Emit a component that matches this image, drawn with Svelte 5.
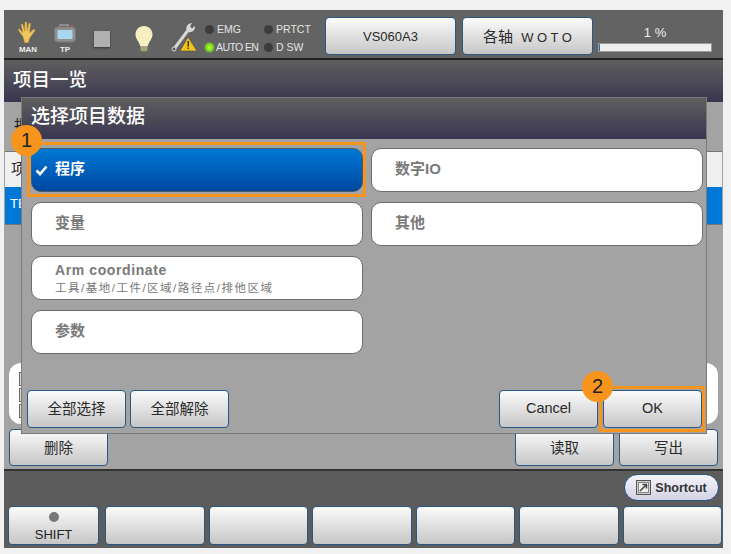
<script>
  const functionKeys = ['', '', '', '', '', ''];
  const options = [
    { label: '程序', on: true },
    { label: '数字IO' },
    { label: '变量' },
    { label: '其他' },
    { label: 'Arm coordinate', sub: '工具/基地/工件/区域/路径点/排他区域' },
    { gap: true },
    { label: '参数' }
  ];
</script>

<div class="page">
  <div class="device">
    <header class="topbar">
      <div class="icon hand">
        <svg width="24" height="27" viewBox="0 0 24 24" preserveAspectRatio="none">
          <path d="M6.500 14 2.600 9.400c-.7-.9.500-1.900 1.300-1L7 11.400 5.300 4.600c-.3-1.200 1.300-1.600 1.600-.4L8.600 10 9 2.600c.1-1.300 1.800-1.200 1.800 0l.2 7.300 1.800-6.500c.4-1.200 1.900-.8 1.600.4L13.600 11.500l3.700-3c1-.8 2.100.4 1.200 1.400l-4.500 5.600c-.9 1.300-1.500 3.500-1.500 4.500H8.500c-.3-2.500-1-4.300-2-6z" fill="#eec65c" stroke="#c79a3c" stroke-width=".5"/>
        </svg>
        <span>MAN</span>
      </div>
      <div class="icon tp">
        <svg width="24" height="19" viewBox="0 0 24 19">
          <path d="M7 3V1h8v2" fill="none" stroke="#9a9a9a" stroke-width="1.500"/>
          <rect x="17" y="1" width="3" height="2" fill="#c0504d"/>
          <rect x="1.500" y="3" width="21" height="15" rx="3" fill="#8f8f8f" stroke="#777"/>
          <rect x="4.500" y="6" width="15" height="9" rx="1" fill="#a9d8ee"/>
        </svg>
        <span>TP</span>
      </div>
      <div class="stop"></div>
      <svg class="bulb" width="20" height="28" viewBox="0 0 20 28">
        <path d="M10 1C4.800 1 1.500 5 1.500 9.500c0 4.500 3.500 6.500 4.800 12h7.400c1.300-5.500 4.800-7.500 4.800-12C18.500 5 15.200 1 10 1z" fill="#f6f0c0"/>
        <rect x="6.500" y="22" width="7" height="4" fill="#a8a370"/>
        <rect x="8" y="26" width="4" height="1.500" fill="#77735a"/>
      </svg>
      <svg class="wrench" width="26" height="30" viewBox="0 0 26 30">
        <path d="M3 27 18 7" stroke="#d8d8d8" stroke-width="3" stroke-linecap="round"/>
        <path d="M16 9c-2-4 1-8 5-8l-2 3.500 2 2 3-2.500c.5 4-3 7-7 6z" fill="#d8d8d8"/>
        <circle cx="3" cy="27" r="2" fill="#555" stroke="#d8d8d8"/>
        <path d="M17 15 26 29H9z" fill="#f2c21b" stroke="#444" stroke-width=".5"/>
        <rect x="16.500" y="19" width="1.500" height="5.500" fill="#333"/>
        <rect x="16.500" y="25.500" width="1.500" height="1.500" fill="#333"/>
      </svg>
      <div class="leds">
        <div class="led"><i></i>EMG</div>
        <div class="led"><i></i>PRTCT</div>
        <div class="led tight"><i class="green"></i>AUTO EN</div>
        <div class="led"><i></i>D SW</div>
      </div>
      <button class="btn model">VS060A3</button>
      <button class="btn axis">各轴 <span>W O T O</span></button>
      <div class="speed">
        <div class="pct">1 %</div>
        <div class="bar"><div class="fill" style="width: 1%"></div></div>
      </div>
    </header>

    <div class="title">项目一览</div>

    <main class="content">
      <div class="filter">批</div>
      <div class="table">
        <div class="thead">项</div>
        <div class="trow">TE</div>
      </div>
      <div class="panel">
        <i></i><i></i><i></i>
      </div>
      <div class="actions">
        <button class="btn wide">删除</button>
        <div class="actions-right">
          <button class="btn wide">读取</button>
          <button class="btn wide">写出</button>
        </div>
      </div>
    </main>

    <footer class="bottom">
      <div class="shortcut-row">
        <button class="shortcut">
          <svg width="15" height="15" viewBox="0 0 15 15">
            <rect x=".5" y=".5" width="14" height="14" fill="#d0d0d0" stroke="#555"/>
            <rect x="2.500" y="2.500" width="10" height="10" fill="#eee" stroke="#888"/>
            <path d="M4 11 10 5M6.500 4.500h4v4" stroke="#444" stroke-width="1.500" fill="none"/>
          </svg>
          Shortcut
        </button>
      </div>
      <div class="fkeys">
        <button class="btn fkey shift"><i></i>SHIFT</button>
        {#each functionKeys as key}
          <button class="btn fkey">{key}</button>
        {/each}
      </div>
    </footer>

    <section class="dialog">
      <h2>选择项目数据</h2>
      <div class="body">
        <div class="options">
          {#each options as o}
            {#if o.gap}
              <div></div>
            {:else}
              <button class="opt" class:on={o.on} class:two={o.sub}>
                {#if o.on}
                  <svg class="check" width="13" height="11" viewBox="0 0 13 11">
                    <path d="M1.500 5.500 5 9l6.500-7.500" fill="none" stroke="#fff" stroke-width="2.600"/>
                  </svg>
                {/if}
                <b>{o.label}</b>
                {#if o.sub}<small>{o.sub}</small>{/if}
              </button>
            {/if}
          {/each}
        </div>
        <div class="foot">
          <button class="btn wide">全部选择</button>
          <button class="btn wide">全部解除</button>
          <div class="spacer"></div>
          <button class="btn wide">Cancel</button>
          <button class="btn wide ok">OK</button>
        </div>
      </div>
    </section>

    <div class="mark mark-a"></div>
    <div class="mark mark-b"></div>
    <div class="badge badge-a">1</div>
    <div class="badge badge-b">2</div>
  </div>
</div>

<style>
  :global(body) {
    margin: 0;
    background: #f1f1f1;
  }
  .page {
    width: 731px;
    height: 554px;
    padding: 10px 8px 6px 4px;
    box-sizing: border-box;
    font-family: "Liberation Sans", "Noto Sans CJK SC", sans-serif;
    overflow: hidden;
  }
  .device {
    position: relative;
    width: 719px;
    height: 538px;
    display: flex;
    flex-direction: column;
    background: #5c5c5c;
  }
  button {
    font-family: inherit;
    margin: 0;
    padding: 0;
  }
  .btn {
    box-sizing: border-box;
    border: 1.500px solid #2a5784;
    border-radius: 4px;
    background: linear-gradient(#fbfbfb, #c6c6c6);
    color: #2a2a2a;
    font-size: 14.500px;
    height: 38px;
    padding-bottom: 3px;
    flex: none;
  }
  .wide {
    width: 99px;
  }

  .topbar {
    height: 50px;
    box-sizing: border-box;
    flex: none;
    background: #636363;
    border-bottom: 2px solid #222;
    display: flex;
    align-items: flex-start;
    position: relative;
  }
  .icon {
    display: flex;
    flex-direction: column;
    align-items: center;
    color: #eee;
    font-size: 8px;
    line-height: 8px;
    flex: none;
  }
  .icon span {
    display: block;
  }
  .hand {
    width: 24px;
    margin: 10px 0 0 12px;
  }
  .hand span {
    margin-top: -1px;
    font-weight: 700;
  }
  .tp {
    width: 24px;
    margin: 14px 0 0 13px;
  }
  .tp span {
    margin-top: 3px;
    font-weight: 700;
  }
  .stop {
    width: 16px;
    height: 16px;
    margin: 21px 0 0 17px;
    flex: none;
    background: #b0b0b0;
    box-shadow: 0 1px 2px #333;
  }
  .bulb {
    margin: 15px 0 0 24px;
    flex: none;
  }
  .wrench {
    margin: 12px 0 0 17px;
    flex: none;
  }
  .leds {
    width: 118px;
    margin: 10px 0 0 8px;
    flex: none;
    display: grid;
    grid-template-columns: 59px 59px;
    grid-auto-rows: 18px;
    align-items: center;
    color: #e4e4e4;
    font-size: 10.500px;
  }
  .led {
    display: flex;
    align-items: center;
    white-space: nowrap;
    gap: 3px;
  }
  .led.tight {
    gap: 2px;
    letter-spacing: -.6px;
  }
  .led i {
    width: 9px;
    height: 9px;
    border-radius: 50%;
    background: #3c3c3c;
    flex: none;
  }
  .led i.green {
    background: radial-gradient(#b6ff3a, #4fb50a);
    box-shadow: 0 0 2px #7de02a;
  }
  .model {
    width: 131px;
    margin: 7px 0 0 2px;
    font-size: 13px;
    padding-bottom: 0;
  }
  .axis {
    width: 131px;
    margin: 7px 0 0 6px;
    font-size: 15px;
    padding-bottom: 2px;
  }
  .axis span {
    font-size: 13px;
    margin-left: 4px;
  }
  .speed {
    width: 114px;
    margin: 0 0 0 5px;
    flex: none;
  }
  .pct {
    color: #eee;
    text-align: center;
    font-size: 13px;
    line-height: 16px;
    margin-top: 15px;
  }
  .bar {
    height: 9px;
    margin-top: 2px;
    background: #efefef;
    border: 1px solid #999;
    box-sizing: border-box;
  }
  .fill {
    height: 100%;
    background: #2f6fb0;
  }

  .title {
    height: 42px;
    box-sizing: border-box;
    flex: none;
    background: linear-gradient(#5f5f5f, #393650);
    color: #fff;
    font-size: 18.500px;
    font-weight: 500;
    line-height: 40px;
    padding-left: 9px;
  }

  .content {
    flex: 1;
    min-height: 0;
    background: #a3a3a3;
    border-bottom: 2px solid #333;
    display: flex;
    flex-direction: column;
    padding: 0 5px;
    box-sizing: border-box;
  }
  .filter {
    height: 49px;
    flex: none;
    font-size: 15px;
    color: #222;
    padding: 12px 0 0 5px;
    box-sizing: border-box;
  }
  .table {
    margin: 0 -4px 0 -4px;
    flex: none;
  }
  .thead {
    height: 36px;
    background: #f0f0f0;
    border-top: 1px solid #777;
    box-sizing: border-box;
    font-size: 15px;
    line-height: 34px;
    padding-left: 6px;
    color: #222;
  }
  .trow {
    height: 37px;
    background: #0078d7;
    color: #fff;
    font-size: 13px;
    line-height: 33px;
    padding-left: 5px;
    border-bottom: 1px solid #777;
  }
  .panel {
    flex: none;
    margin: 138px 0 0 0;
    height: 61px;
    width: 709px;
    background: #fff;
    border-radius: 12px;
    padding: 9px 0 0 10px;
    box-sizing: border-box;
    display: flex;
    flex-direction: column;
    gap: 2px;
  }
  .panel i {
    display: block;
    width: 6px;
    height: 12px;
    border: 1px solid #666;
    background: #ddd;
  }
  .actions {
    display: flex;
    justify-content: space-between;
    margin-top: 5px;
    width: 709px;
  }
  .actions .btn {
    height: 37px;
  }
  .actions-right {
    display: flex;
    gap: 5px;
  }

  .bottom {
    height: 77px;
    flex: none;
    background: #5c5c5c;
    padding: 3px 1px 3px 4px;
    box-sizing: border-box;
    display: flex;
    flex-direction: column;
    justify-content: space-between;
  }
  .shortcut-row {
    display: flex;
    justify-content: flex-end;
    padding-right: 3px;
  }
  .shortcut {
    width: 95px;
    height: 27px;
    border-radius: 14px;
    border: 1.500px solid #2a5784;
    background: linear-gradient(#f4f4fa, #d4d2e4);
    color: #333;
    font-size: 12.500px;
    font-weight: 700;
    display: flex;
    align-items: center;
    justify-content: center;
    gap: 4px;
  }
  .fkeys {
    display: flex;
    gap: 4px;
  }
  .fkey {
    flex: 1;
    height: 39px;
    font-size: 13px;
    color: #222;
  }
  .shift {
    flex: none;
    width: 91px;
    margin-right: 2px;
    padding: 2px 0 0;
    display: flex;
    flex-direction: column;
    align-items: center;
    justify-content: center;
    gap: 5px;
  }
  .shift i {
    width: 10px;
    height: 10px;
    border-radius: 50%;
    background: #777;
    display: block;
  }

  .dialog {
    position: absolute;
    left: 18px;
    top: 88px;
    width: 684px;
    height: 335px;
    background: #a3a3a3;
    box-shadow: 0 0 0 1px #7b7b7b;
    display: flex;
    flex-direction: column;
  }
  .dialog h2 {
    margin: 0;
    height: 41px;
    flex: none;
    background: linear-gradient(#5f5f5f, #393650);
    color: #fff;
    font-size: 19px;
    font-weight: 500;
    line-height: 38px;
    padding-left: 9px;
    box-sizing: border-box;
  }
  .body {
    flex: 1;
    display: flex;
    flex-direction: column;
    justify-content: space-between;
    padding: 9px 4px 5px 5px;
  }
  .options {
    margin-left: 4px;
    display: grid;
    grid-template-columns: 332px 332px;
    grid-auto-rows: 44px;
    column-gap: 8px;
    row-gap: 10px;
  }
  .opt {
    position: relative;
    border: 1.500px solid #6d6d6d;
    border-radius: 10px;
    background: #fff;
    color: #7a7a7a;
    text-align: left;
    padding: 0 0 3px 23px;
    font-size: 15px;
    display: flex;
    flex-direction: column;
    justify-content: center;
    align-items: flex-start;
    box-sizing: border-box;
  }
  .opt b {
    font-weight: 700;
    line-height: 18px;
  }
  .opt.two {
    padding-bottom: 0;
    justify-content: flex-start;
    padding-top: 4px;
  }
  .opt.two b {
    font-size: 14px;
    letter-spacing: .6px;
  }
  .opt small {
    font-size: 11.500px;
    line-height: 18px;
    letter-spacing: 1.500px;
    color: #777;
    white-space: nowrap;
  }
  .opt.on {
    background: linear-gradient(#0079d5, #00479f);
    color: #fff;
    border-color: #4d5a68;
  }
  .check {
    position: absolute;
    left: 3px;
    top: 16px;
  }
  .foot {
    display: flex;
    gap: 4px;
  }
  .ok {
    margin-left: 1px;
  }
  .spacer {
    flex: 1;
  }

  .mark {
    position: absolute;
    border: 3px solid #f7941d;
    box-sizing: border-box;
    pointer-events: none;
  }
  .mark-a {
    left: 23px;
    top: 132px;
    width: 339px;
    height: 55px;
  }
  .mark-b {
    left: 595px;
    top: 376px;
    width: 106px;
    height: 46px;
  }
  .badge {
    position: absolute;
    width: 31px;
    height: 31px;
    border-radius: 50%;
    background: #f7941d;
    color: #222;
    font-size: 20px;
    line-height: 30px;
    text-align: center;
  }
  .badge-a {
    left: 7px;
    top: 115px;
  }
  .badge-b {
    left: 578px;
    top: 361px;
  }
</style>
